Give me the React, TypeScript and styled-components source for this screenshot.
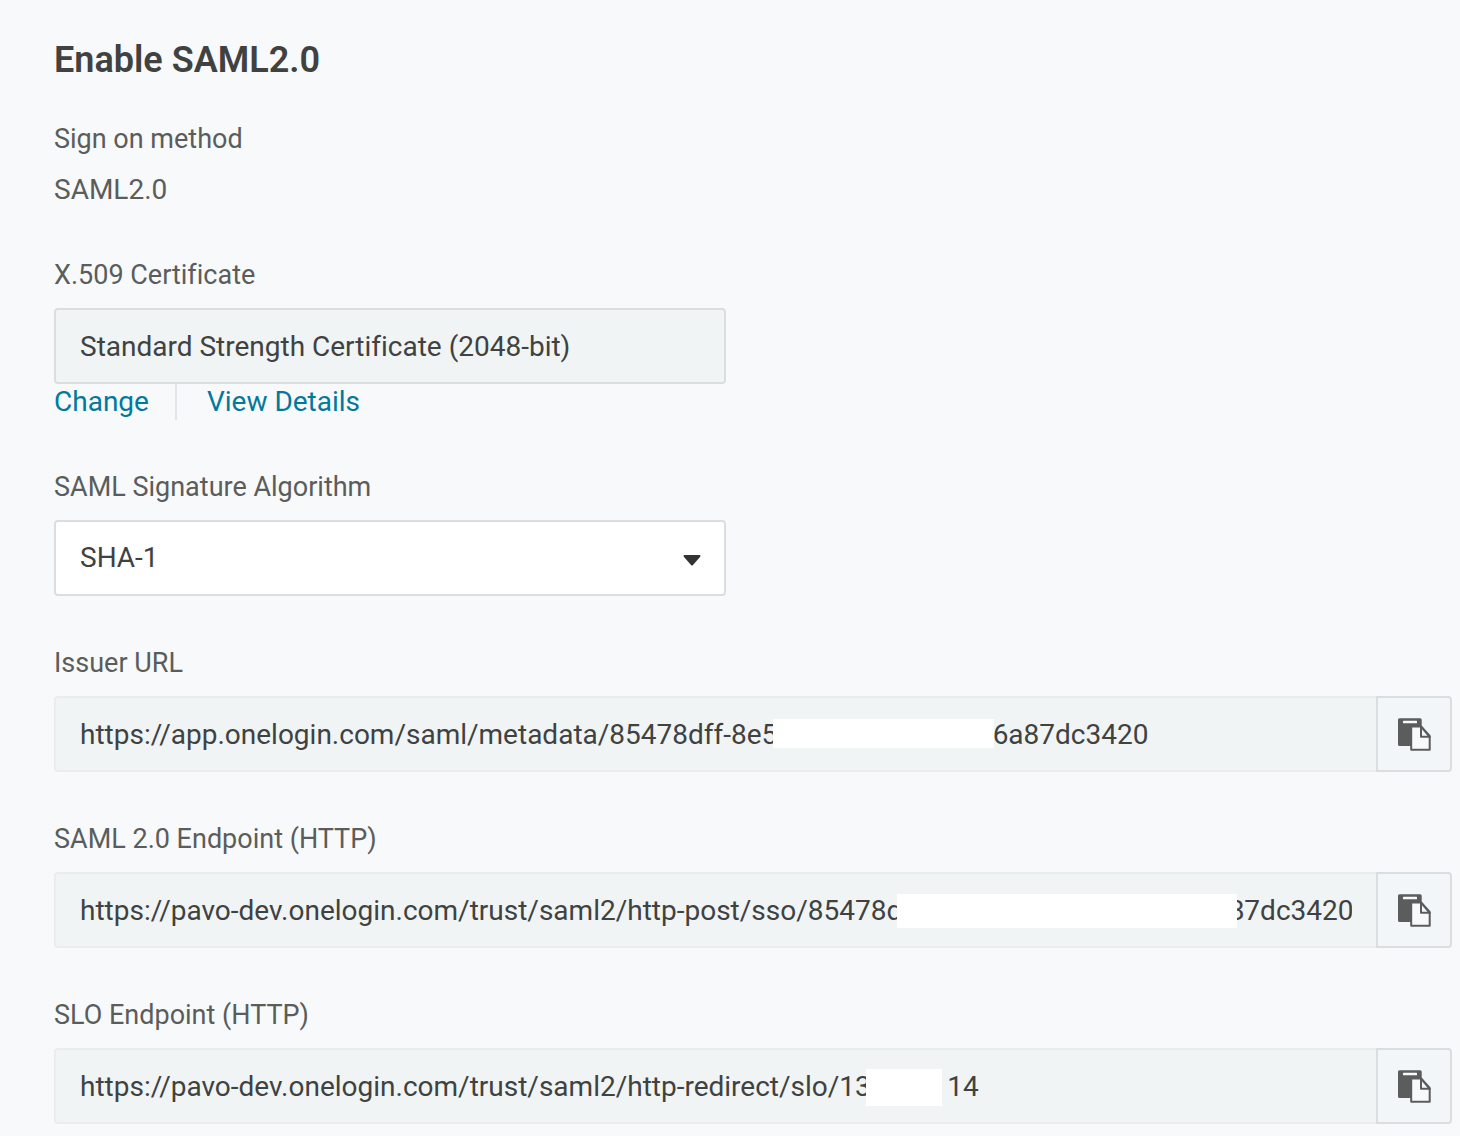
import React, { useId } from "react";
import styled, { createGlobalStyle } from "styled-components";

const GlobalStyle = createGlobalStyle`
  *, *::before, *::after { box-sizing: border-box; }
  body {
    margin: 0;
    background: #f8f9fb;
    color: #3f4241;
    font-family: Roboto, "Liberation Sans", sans-serif;
    font-size: 28px;
    line-height: 36px;
    font-variant-ligatures: none;
  }
`;

const Page = styled.main`
  padding: 36px 8px 12px 54px;
`;

const Title = styled.h1`
  margin: 0 0 38px;
  font-size: 36px;
  line-height: 48px;
  font-weight: 600;
`;

const Form = styled.form`
  display: flex;
  flex-direction: column;
  gap: 50px;
`;

const Group = styled.div`
  display: flex;
  flex-direction: column;
`;

const Label = styled.label`
  margin-bottom: 16px;
  font-size: 27px;
  line-height: 34px;
  color: #5a5d5b;
`;

const Value = styled.output`
  color: #5a5d5b;
`;

const Input = styled.input<{ $joined?: boolean }>`
  width: 100%;
  max-width: ${(p) => (p.$joined ? "none" : "672px")};
  height: 76px;
  padding: 0 24px;
  border: 2px solid ${(p) => (p.$joined ? "#e9edee" : "#dadedf")};
  border-right-width: ${(p) => (p.$joined ? "0" : "2px")};
  border-radius: ${(p) => (p.$joined ? "4px 0 0 4px" : "4px")};
  background: #f0f4f5;
  color: inherit;
  font: inherit;
  font-variant-ligatures: none;
  outline: none;
`;

const Links = styled.nav`
  display: flex;
`;

const Link = styled.a`
  color: #007a9c;
  text-decoration: none;

  & + & {
    margin-left: 26px;
    padding-left: 30px;
    border-left: 2px solid #e2e5e7;
  }
`;

const SelectBox = styled.div`
  position: relative;
  max-width: 672px;
`;

const Select = styled.select`
  display: block;
  width: 100%;
  height: 76px;
  padding: 0 24px;
  border: 2px solid #dadedf;
  border-radius: 4px;
  background: #fff;
  color: inherit;
  font: inherit;
  appearance: none;
`;

const Caret = styled.svg`
  position: absolute;
  top: 35px;
  right: 25px;
  pointer-events: none;
`;

const CopyRow = styled.div`
  display: flex;
`;

const InputBox = styled.div`
  position: relative;
  flex: 1;
`;

const Mask = styled.span<{ $left: number; $top: number; $width: number; $height: number }>`
  position: absolute;
  left: ${(p) => p.$left}px;
  top: ${(p) => p.$top}px;
  width: ${(p) => p.$width}px;
  height: ${(p) => p.$height}px;
  background: #fff;
`;

const CopyButton = styled.button`
  display: flex;
  align-items: center;
  justify-content: center;
  width: 76px;
  height: 76px;
  padding: 0;
  border: 2px solid #dadedf;
  border-radius: 0 4px 4px 0;
  background: #f3f6f8;
  color: #5a5d5b;
  cursor: pointer;
`;

const PasteIcon = () => (
  <svg width="34" height="34" viewBox="0 0 34 34" aria-hidden="true">
    <path
      fill="currentColor"
      d="M2.500 1.300H23.200Q24.700 1.300 24.700 2.800V11H14V29H2.500Q1 29 1 27.500V2.800Q1 1.300 2.500 1.300Z"
    />
    <rect x="6" y="3.700" width="14" height="2.600" rx="0.500" fill="#f8f9fb" />
    <path
      fill="#f8f9fb"
      stroke="currentColor"
      strokeWidth="2"
      strokeLinejoin="round"
      d="M14.200 9.500H24L32.700 19V32.700H14.200Z"
    />
    <path
      fill="#f8f9fb"
      stroke="currentColor"
      strokeWidth="2"
      strokeLinejoin="round"
      d="M24 9.500V19.800H32.700Z"
    />
  </svg>
);

type MaskBox = { left: number; top: number; width: number; height: number };

const CopyField = ({ label, value, mask }: { label: string; value: string; mask: MaskBox }) => {
  const id = useId();
  return (
    <Group>
      <Label htmlFor={id}>{label}</Label>
      <CopyRow>
        <InputBox>
          <Input id={id} $joined readOnly value={value} />
          <Mask $left={mask.left} $top={mask.top} $width={mask.width} $height={mask.height} />
        </InputBox>
        <CopyButton type="button" aria-label={`Copy ${label}`}>
          <PasteIcon />
        </CopyButton>
      </CopyRow>
    </Group>
  );
};

const gap = (n: number) => " ".repeat(n);

const endpoints = [
  {
    label: "Issuer URL",
    value: `https://app.onelogin.com/saml/metadata/85478dff-8e5${gap(31)}6a87dc3420`,
    mask: { left: 719, top: 23, width: 221, height: 29 },
  },
  {
    label: "SAML 2.0 Endpoint (HTTP)",
    value: `https://pavo-dev.onelogin.com/trust/saml2/http-post/sso/85478d${gap(47)}87dc3420`,
    mask: { left: 843, top: 22, width: 340, height: 34 },
  },
  {
    label: "SLO Endpoint (HTTP)",
    value: `https://pavo-dev.onelogin.com/trust/saml2/http-redirect/slo/13${gap(11)}14`,
    mask: { left: 812, top: 21, width: 76, height: 37 },
  },
];

export default function App() {
  return (
    <>
      <GlobalStyle />
      <Page>
        <Title>Enable SAML2.0</Title>
        <Form>
          <Group>
            <Label htmlFor="method">Sign on method</Label>
            <Value id="method">SAML2.0</Value>
          </Group>
          <Group>
            <Label htmlFor="certificate">X.509 Certificate</Label>
            <Input id="certificate" readOnly value="Standard Strength Certificate (2048-bit)" />
            <Links>
              <Link href="#change">Change</Link>
              <Link href="#details">View Details</Link>
            </Links>
          </Group>
          <Group>
            <Label htmlFor="algorithm">SAML Signature Algorithm</Label>
            <SelectBox>
              <Select id="algorithm" defaultValue="SHA-1">
                <option>SHA-1</option>
                <option>SHA-256</option>
                <option>SHA-384</option>
                <option>SHA-512</option>
              </Select>
              <Caret width="18" height="11" viewBox="0 0 18 11" aria-hidden="true">
                <path fill="#333" d="M1 0H17Q18 1 17 2L10 10Q9 11 8 10L1 2Q0 1 1 0Z" />
              </Caret>
            </SelectBox>
          </Group>
          {endpoints.map((e) => (
            <CopyField key={e.label} {...e} />
          ))}
        </Form>
      </Page>
    </>
  );
}
